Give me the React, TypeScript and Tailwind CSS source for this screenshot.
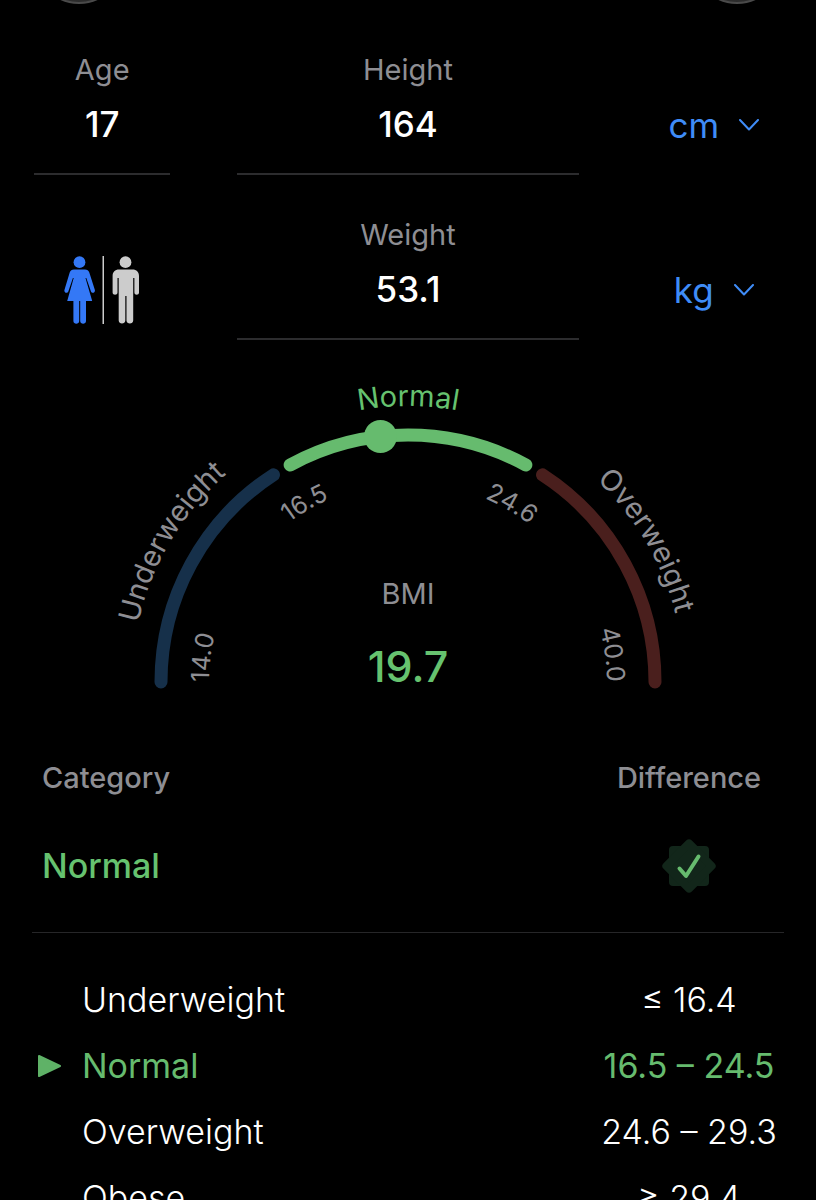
import React, { useState } from 'react';

type Segment = {
  name: string;
  from: number;
  to: number;
  color: string;
  labelColor: string;
  labelOffset: string;
};

// Angles are in degrees from the top of the dial, negative to the left
const segments: Segment[] = [
  { name: 'Underweight', from: -90, to: -33, color: '#16304a', labelColor: '#8e8e93', labelOffset: '17%' },
  { name: 'Normal', from: -28.5, to: 28.5, color: '#66bb6e', labelColor: '#66c26f', labelOffset: '50%' },
  { name: 'Overweight', from: 33, to: 90, color: '#4a1f1d', labelColor: '#8e8e93', labelOffset: '83%' },
];

const ticks: { value: string; offset: string; anchor: 'start' | 'middle' | 'end' }[] = [
  { value: '14.0', offset: '0%', anchor: 'start' },
  { value: '16.5', offset: '33.3%', anchor: 'middle' },
  { value: '24.6', offset: '66.8%', anchor: 'middle' },
  { value: '40.0', offset: '100%', anchor: 'end' },
];

const categories = [
  { name: 'Underweight', range: '≤ 16.4' },
  { name: 'Normal', range: '16.5 – 24.5' },
  { name: 'Overweight', range: '24.6 – 29.3' },
  { name: 'Obese', range: '≥ 29.4' },
];

const RADIUS = 247;

function point(angle: number, radius: number) {
  const rad = (angle * Math.PI) / 180;
  return { x: Math.sin(rad) * radius, y: -Math.cos(rad) * radius };
}

function arc(from: number, to: number, radius: number) {
  const a = point(from, radius);
  const b = point(to, radius);
  return `M ${a.x} ${a.y} A ${radius} ${radius} 0 0 1 ${b.x} ${b.y}`;
}

function Field({ id, label, value, onChange }: { id: string; label: string; value: string; onChange: (v: string) => void }) {
  return (
    <div className="flex flex-col items-center border-b-2 border-[#2c2c2e] pb-[27px]">
      <label htmlFor={id} className="text-[29px] leading-9 text-[#8e8e93]">{label}</label>
      <input
        id={id}
        inputMode="decimal"
        value={value}
        onChange={(e) => onChange(e.target.value)}
        className="mt-[14px] h-11 w-full bg-transparent text-center text-[35px] font-medium text-white outline-none"
      />
    </div>
  );
}

function UnitSelect({ label, units }: { label: string; units: string[] }) {
  return (
    <div className="flex items-center justify-center gap-5 self-start pt-[51px] text-[#3f8cf7]">
      <select aria-label={label} className="field-sizing-content h-11 appearance-none bg-transparent text-[35px] leading-11 outline-none">
        {units.map((unit) => (
          <option key={unit}>{unit}</option>
        ))}
      </select>
      <svg className="h-3 w-5" viewBox="0 0 20 12" fill="none" stroke="currentColor" strokeWidth="2" strokeLinecap="round" strokeLinejoin="round">
        <path d="M1 1l9 9.500 9-9.500" />
      </svg>
    </div>
  );
}

function GenderToggle() {
  const [female, setFemale] = useState(true);
  return (
    <button
      type="button"
      aria-label="Gender"
      onClick={() => setFemale(!female)}
      className="mt-[39px] self-start justify-self-center"
    >
      <svg className="h-17 w-19" viewBox="0 0 76 68">
        <g fill={female ? '#3478f6' : '#cccccc'}>
          <circle cx="15.500" cy="6.200" r="5.900" />
          <path d="M10 13.500h11c2.200 0 3.600 1 4.300 3l5.500 17.300c.9 2.900-2.900 4.200-3.900 1.400L22.300 22h-.8l6.700 23H22v20c0 3.600-5.800 3.600-5.800 0V45h-1v20c0 3.600-5.800 3.600-5.800 0V45H3.200L9.700 22h-.8L4.400 35.200c-1 2.800-4.800 1.500-3.900-1.400L5.700 16.500c.7-2 2.100-3 4.300-3z" />
        </g>
        <rect x="38.500" y="0" width="1.500" height="68" fill="#cccccc" />
        <g fill={female ? '#cccccc' : '#3478f6'}>
          <circle cx="61.500" cy="6.200" r="5.900" />
          <path d="M55 13.500h13.500c4 0 6.500 2.500 6.500 6.500v16.500c0 3-4.600 3-4.600 0V22h-1.200v42.500c0 4-6.700 4-6.700 0V40h-1.200v24.500c0 4-6.600 4-6.600 0V22h-1.200v14.500c0 3-4.900 3-4.900 0V20c0-4 2.400-6.500 6.400-6.500z" />
        </g>
      </svg>
    </button>
  );
}

function Gauge() {
  const dot = point(-6.400, RADIUS);
  return (
    <svg className="mx-auto mt-[30px] w-full max-w-[640px]" viewBox="-320 -312 640 330" role="img" aria-label="BMI 19.7, Normal">
      <defs>
        <path id="outer" d={arc(-90, 90, 276)} />
        <path id="inner" d={arc(-90, 90, 199)} />
      </defs>
      {segments.map((s) => (
        <g key={s.name}>
          <path d={arc(s.from, s.to, RADIUS)} fill="none" stroke={s.color} strokeWidth="13" strokeLinecap="round" />
          <text className="text-[29px]" fill={s.labelColor} textAnchor="middle">
            <textPath href="#outer" startOffset={s.labelOffset}>{s.name}</textPath>
          </text>
        </g>
      ))}
      <circle cx={dot.x} cy={dot.y} r="16.500" fill="#66bb6e" />
      {ticks.map((t) => (
        <text key={t.value} className="text-[25px]" fill="#8e8e93" textAnchor={t.anchor}>
          <textPath href="#inner" startOffset={t.offset}>{t.value}</textPath>
        </text>
      ))}
      <text y="-78" className="text-[29px]" fill="#8e8e93" textAnchor="middle">BMI</text>
      <text y="0" className="text-[43px] font-medium" fill="#66c26f" textAnchor="middle">19.7</text>
    </svg>
  );
}

function Badge() {
  return (
    <svg className="mx-auto size-14" viewBox="-28 -28 56 56" role="img" aria-label="In range">
      <g fill="#12261a" stroke="#12261a" strokeWidth="8" strokeLinejoin="round">
        <rect x="-16" y="-16" width="32" height="32" />
        <rect x="-16" y="-16" width="32" height="32" transform="rotate(45)" />
      </g>
      <path d="M-9.500 2.500l6.500 7.500L9.500-9.500" fill="none" stroke="#66bb6e" strokeWidth="4" strokeLinecap="round" strokeLinejoin="round" />
    </svg>
  );
}

export default function App() {
  const [age, setAge] = useState('17');
  const [height, setHeight] = useState('164');
  const [weight, setWeight] = useState('53.1');
  const current = 'Normal';

  return (
    <main className="h-screen overflow-hidden bg-black font-['Inter',sans-serif] text-white">
      <header className="-mt-21 flex justify-between px-[35px]">
        <button type="button" aria-label="Menu" className="size-22 rounded-full border-2 border-[#4a4a4a] bg-[#2c2c2c]" />
        <button type="button" aria-label="Settings" className="size-22 rounded-full border-2 border-[#4a4a4a] bg-[#2c2c2c]" />
      </header>

      <form className="mt-12 grid grid-cols-[2fr_5fr_2fr] gap-x-[67px] gap-y-[42px] px-[34px]">
        <Field id="age" label="Age" value={age} onChange={setAge} />
        <Field id="height" label="Height" value={height} onChange={setHeight} />
        <UnitSelect label="Height unit" units={['cm', 'ft']} />
        <GenderToggle />
        <Field id="weight" label="Weight" value={weight} onChange={setWeight} />
        <UnitSelect label="Weight unit" units={['kg', 'lb']} />
      </form>

      <Gauge />

      <section className="mt-[55px] px-8">
        <table className="w-full border-b border-[#262628]">
          <thead>
            <tr className="h-[45px] text-[29px] text-[#8e8e93]">
              <th className="pl-[10px] text-left font-medium">Category</th>
              <th className="w-[190px] font-medium">Difference</th>
            </tr>
          </thead>
          <tbody>
            <tr className="h-[132px]">
              <td className="pl-[10px] text-[34px] font-medium text-[#66c26f]">{current}</td>
              <td><Badge /></td>
            </tr>
          </tbody>
        </table>

        <table className="mt-[34px] w-full text-[34px] font-light">
          <tbody>
            {categories.map((c) => (
              <tr key={c.name} className={c.name === current ? 'h-[66px] font-normal text-[#66bb6e]' : 'h-[66px]'}>
                <td className="w-[50px] pl-[5px]">
                  {c.name === current && (
                    <svg className="h-6 w-6" viewBox="0 0 24 24" fill="#5fb267" stroke="#5fb267" strokeWidth="2" strokeLinejoin="round">
                      <path d="M2 2l21 10L2 22z" />
                    </svg>
                  )}
                </td>
                <td>{c.name}</td>
                <td className="w-[190px] text-center whitespace-nowrap">{c.range}</td>
              </tr>
            ))}
          </tbody>
        </table>
      </section>
    </main>
  );
}
